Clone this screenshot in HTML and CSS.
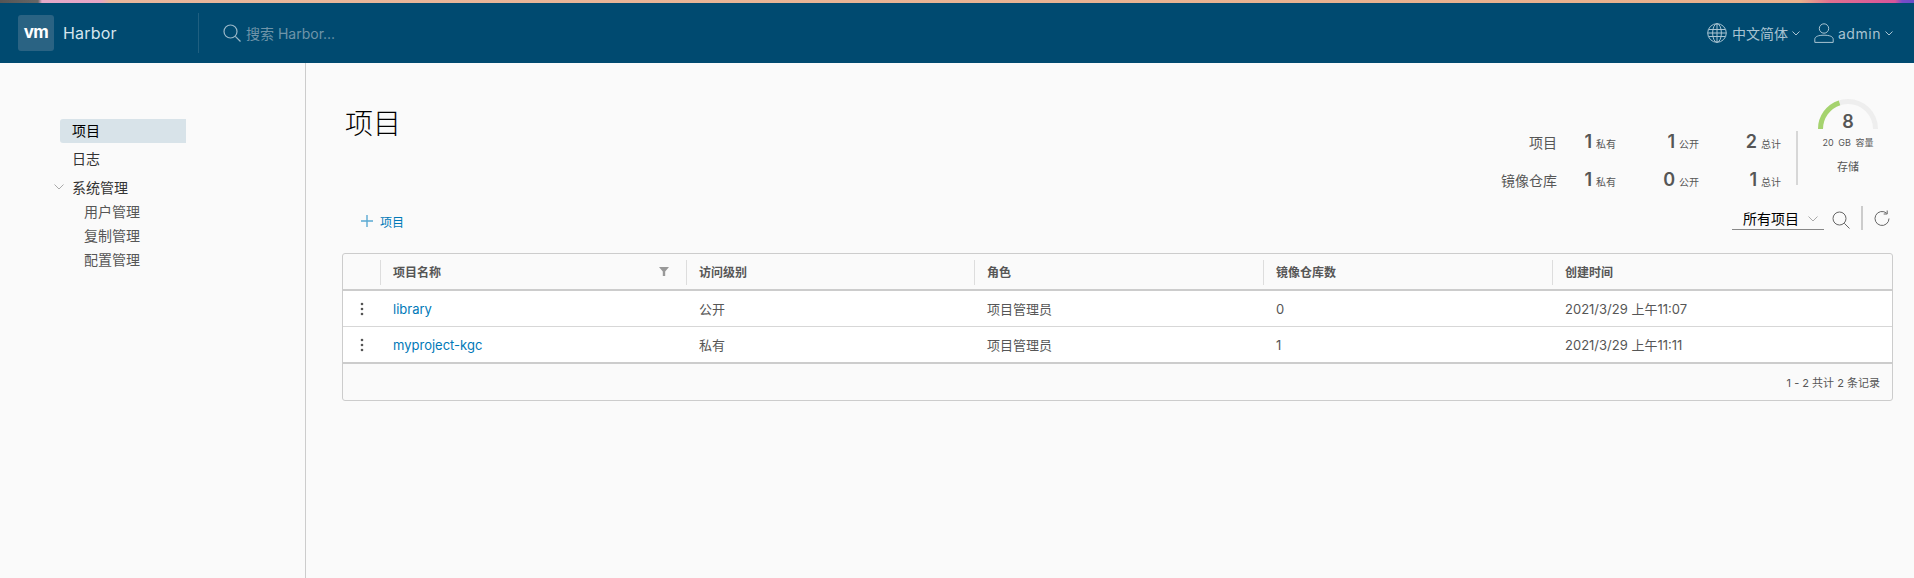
FILE: index.html
```html
<!DOCTYPE html>
<html lang="zh-CN">
<head>
<meta charset="utf-8">
<title>Harbor</title>
<link rel="stylesheet" href="styles.css">
</head>
<body>
<div class="strip"></div>
<header class="topbar">
  <div class="brand">
    <span class="logo">vm</span>
    <span class="brand-name">Harbor</span>
  </div>
  <div class="search">
    <svg class="i-search" viewBox="0 0 18 18" width="18" height="18"><circle cx="7.5" cy="7.5" r="6.5"/><path d="M12.3 12.3 17.5 17.5"/></svg>
    <span>搜索 Harbor...</span>
  </div>
  <div class="top-right">
    <svg class="i-globe" viewBox="0 0 20 20" width="20" height="20"><circle cx="10" cy="10" r="9.3"/><ellipse cx="10" cy="10" rx="4.4" ry="9.3"/><path d="M10 .7v18.6M1.6 6.5h16.8M.8 10h18.4M1.6 13.5h16.8"/></svg>
    <span class="lang">中文简体</span>
    <svg class="chev chev-top" viewBox="0 0 8 5" width="8" height="5"><path d="M.5.5 4 4 7.5.5"/></svg>
    <svg class="i-user" viewBox="0 0 20 20" width="20" height="20"><circle cx="10" cy="5.5" r="4.7"/><path d="M.8 19.4v-3.2c0-2.6 3.6-4 9.2-4s9.2 1.4 9.2 4v3.2z"/></svg>
    <span class="admin">admin</span>
    <svg class="chev chev-top" viewBox="0 0 8 5" width="8" height="5"><path d="M.5.5 4 4 7.5.5"/></svg>
  </div>
</header>
<div class="layout">
  <nav class="sidebar">
    <a class="nav-item active">项目</a>
    <a class="nav-item">日志</a>
    <a class="nav-item nav-group">
      <svg class="chev nav-chev" viewBox="0 0 10 6" width="10" height="6"><path d="M.5.5 5 5 9.5.5"/></svg>系统管理</a>
    <a class="nav-child">用户管理</a>
    <a class="nav-child">复制管理</a>
    <a class="nav-child">配置管理</a>
  </nav>
  <main class="main">
    <section class="top-row">
      <h1 class="title">项目</h1>
      <div class="stats">
        <span class="s-label">项目</span>
        <span class="s-cell"><b>1</b><small>私有</small></span>
        <span class="s-cell"><b>1</b><small>公开</small></span>
        <span class="s-cell"><b>2</b><small>总计</small></span>
        <span class="s-label">镜像仓库</span>
        <span class="s-cell"><b>1</b><small>私有</small></span>
        <span class="s-cell"><b>0</b><small>公开</small></span>
        <span class="s-cell"><b>1</b><small>总计</small></span>
      </div>
      <div class="divider"></div>
      <div class="storage">
        <div class="gauge">
          <svg viewBox="0 0 60 30" width="60" height="30"><path class="g-bg" d="M2.5 30a27.500 27.500 0 0 1 55 0"/><path class="g-fg" d="M2.500 30A27.500 27.500 0 0 1 21.500 3.850"/></svg>
          <span class="g-num">8</span>
        </div>
        <div class="cap">20 GB 容量</div>
        <div class="store-label">存储</div>
      </div>
    </section>
    <section class="toolbar">
      <button class="add"><svg class="i-plus" viewBox="0 0 12 12" width="12" height="12"><path d="M6 0v12M0 6h12"/></svg>项目</button>
      <div class="tools">
        <div class="select">所有项目<svg class="chev" viewBox="0 0 10 6" width="10" height="6"><path d="M.5.5 5 5 9.5.5"/></svg></div>
        <svg class="i-tool" viewBox="0 0 18 18" width="18" height="18"><circle cx="7.500" cy="7.500" r="6.500"/><path d="M12.300 12.300 17.500 17.500"/></svg>
        <span class="tool-sep"></span>
        <svg class="i-tool" viewBox="0 0 16 16" width="16" height="16"><path d="M12.600 3.200A7 7 0 1 0 15 8.500"/><path d="M13.200 .5v3.500H9.700"/></svg>
      </div>
    </section>
    <section class="grid">
      <div class="row head">
        <div class="cell"></div>
        <div class="cell hc hc-filter">项目名称<svg class="i-filter" viewBox="0 0 10 9" width="10" height="9"><path d="M0 0h10L6.200 4.500V9H3.800V4.500z"/></svg></div>
        <div class="cell hc">访问级别</div>
        <div class="cell hc">角色</div>
        <div class="cell hc">镜像仓库数</div>
        <div class="cell hc">创建时间</div>
      </div>
      <div class="row body">
        <div class="cell dots"><i></i><i></i><i></i></div>
        <div class="cell"><a class="link">library</a></div>
        <div class="cell">公开</div>
        <div class="cell">项目管理员</div>
        <div class="cell">0</div>
        <div class="cell">2021/3/29 上午11:07</div>
      </div>
      <div class="row body last">
        <div class="cell dots"><i></i><i></i><i></i></div>
        <div class="cell"><a class="link">myproject-kgc</a></div>
        <div class="cell">私有</div>
        <div class="cell">项目管理员</div>
        <div class="cell">1</div>
        <div class="cell">2021/3/29 上午11:11</div>
      </div>
      <div class="foot">1 - 2 共计 2 条记录</div>
    </section>
  </main>
</div>
</body>
</html>
```
FILE: styles.css
```css
* { box-sizing: border-box; }
html, body { margin: 0; height: 100%; overflow: hidden; }
body {
  background: #fafafa;
  color: #565656;
  font-family: Inter, "Noto Sans CJK SC", sans-serif;
  font-size: 13px;
}
svg { display: block; flex: none; fill: none; }
.strip {
  height: 3px;
  background: linear-gradient(90deg, #555 0, #666 38px, #e3a9c8 42px, #e6a6c6 100px, #e8b79c 110px, #e8b08c 1800px, #e0708f 1830px, #d8559a 1895px, #7a4cc8 1902px, #6a4cc8 1914px);
}
.topbar {
  height: 60px;
  background: #004a70;
  display: flex;
  align-items: center;
  padding: 0 21px 0 18px;
}
.brand {
  display: flex;
  align-items: center;
  width: 181px;
  height: 40px;
  border-right: 1px solid #1f5f80;
  gap: 9px;
}
.logo {
  width: 36px;
  height: 36px;
  border-radius: 3px;
  background: #2a6383;
  color: #fff;
  display: flex;
  align-items: center;
  justify-content: center;
  font-size: 17px;
  font-weight: 700;
  letter-spacing: -.5px;
  padding-bottom: 3px;
}
.brand-name { color: #d5e5ee; font-size: 16px; letter-spacing: .2px; }
.search {
  display: flex;
  align-items: center;
  margin-left: 24px;
  gap: 5px;
  color: #6f95a9;
  font-size: 14px;
}
.i-search { stroke: #9ab8c8; stroke-width: 1.2; }
.top-right {
  margin-left: auto;
  display: flex;
  align-items: center;
  color: #a9c4d2;
  font-size: 14px;
}
.i-globe, .i-user { stroke: #a9c4d2; stroke-width: 1; }
.lang { margin-left: 5px; }
.admin { margin-left: 4px; letter-spacing: .55px; }
.chev { stroke: #a9c4d2; stroke-width: 1; }
.chev-top { margin-left: 4px; }
.i-user { margin-left: 14px; }
.layout { display: flex; height: 515px; }
.sidebar {
  width: 306px;
  flex: none;
  border-right: 1px solid #ccc;
  padding: 56px 0 0 60px;
  display: flex;
  flex-direction: column;
  color: #333;
  font-size: 14px;
}
.nav-item {
  display: flex;
  align-items: center;
  width: 126px;
  height: 24px;
  padding: 0 0 2px 12px;
  margin-bottom: 4px;
  border-radius: 3px 0 0 3px;
  position: relative;
}
.active { background: #d8e3e9; color: #000; }
.nav-chev { stroke: #aaa; position: absolute; left: -6px; top: 9px; }
.nav-child {
  height: 24px;
  display: flex;
  align-items: center;
  padding-left: 24px;
  color: #565656;
}
.nav-group { margin-bottom: 0; padding-bottom: 0; }
.main { flex: 1; padding: 36px 21px 0 36px; min-width: 0; }
.top-row { display: flex; height: 107px; }
.title {
  margin: 7px auto 0 3px;
  font-size: 28px;
  line-height: 36px;
  font-weight: 300;
  color: #000;
}
.stats {
  display: grid;
  grid-template-columns: 60px 59px 83px 82px;
  grid-auto-rows: 38px;
  margin-top: 24px;
  align-self: flex-start;
}
.s-label {
  display: flex;
  align-items: center;
  justify-content: flex-end;
  font-size: 14px;
}
.s-cell {
  display: flex;
  align-items: baseline;
  justify-content: flex-end;
  gap: 4px;
  line-height: 38px;
}
.s-cell b { font-size: 18px; font-weight: 600; }
.s-cell small { font-size: 10px; }
.divider {
  width: 2px;
  height: 54px;
  margin: 32px 5px 0 15px;
  background: #d7d7d7;
}
.storage {
  width: 90px;
  display: flex;
  flex-direction: column;
  align-items: center;
  font-size: 10px;
}
.gauge { position: relative; width: 60px; height: 30px; }
.g-bg { stroke: #eee; stroke-width: 5; }
.g-fg { stroke: #a5d36e; stroke-width: 5; }
.g-num {
  position: absolute;
  left: 0;
  right: 0;
  top: 11px;
  text-align: center;
  font-size: 18px;
  line-height: 24px;
  font-weight: 600;
}
.cap { margin-top: 7px; line-height: 14px; font-size: 9px; word-spacing: 2px; }
.store-label { margin-top: 10px; font-size: 11px; line-height: 14px; }
.toolbar {
  display: flex;
  align-items: center;
  justify-content: space-between;
  height: 24px;
  margin-bottom: 23px;
}
.add {
  display: flex;
  align-items: center;
  gap: 7px;
  margin: 6px 0 0 19px;
  padding: 0;
  border: 0;
  background: none;
  color: #0079b8;
  font: inherit;
  font-size: 12px;
}
.i-plus { stroke: #5aa9d2; stroke-width: 1.4; }
.tools { display: flex; align-items: center; margin-right: 3px; }
.select {
  width: 92px;
  height: 22px;
  margin-top: 2px;
  padding: 0 6px 0 11px;
  border-bottom: 1px solid #888;
  color: #000;
  font-size: 14px;
  line-height: 20px;
  display: flex;
  align-items: center;
  justify-content: space-between;
}
.select .chev { stroke: #aaa; }
.i-tool { stroke: #666; stroke-width: 1; }
.select + .i-tool { margin-left: 8px; margin-top: 3px; }
.tool-sep { width: 2px; height: 24px; background: #ccc; margin: 0 11px 0 11px; }
.grid {
  border: 1px solid #ccc;
  border-radius: 3px;
  background: #fafafa;
}
.row {
  display: grid;
  grid-template-columns: 37px 306px 288px 289px 289px 1fr;
  align-items: center;
}
.head { height: 37px; border-bottom: 2px solid #ccc; }
.hc {
  height: 25px;
  border-left: 1px solid #ddd;
  padding: 0 0 2px 12px;
  display: flex;
  align-items: center;
  font-size: 12px;
  font-weight: 600;
  margin-top: 1px;
}
.hc-filter { justify-content: space-between; padding-right: 17px; }
.i-filter { fill: #999; }
.body {
  height: 36px;
  background: #fff;
  border-bottom: 1px solid #d7d7d7;
  font-size: 13px;
}
.body .cell { padding-left: 13px; }
.last { height: 37px; border-bottom: 2px solid #ccc; }
.link { color: #0079b8; }
.body .dots {
  padding: 0;
  display: flex;
  flex-direction: column;
  align-items: center;
  gap: 3px;
  margin-left: 1px;
}
.dots i { width: 2px; height: 2px; border-radius: 50%; background: #565656; box-shadow: 0 0 0 .3px #565656; }
.foot {
  height: 36px;
  display: flex;
  align-items: center;
  justify-content: flex-end;
  padding-right: 12px;
  font-size: 11px;
  color: #565656;
}
```
